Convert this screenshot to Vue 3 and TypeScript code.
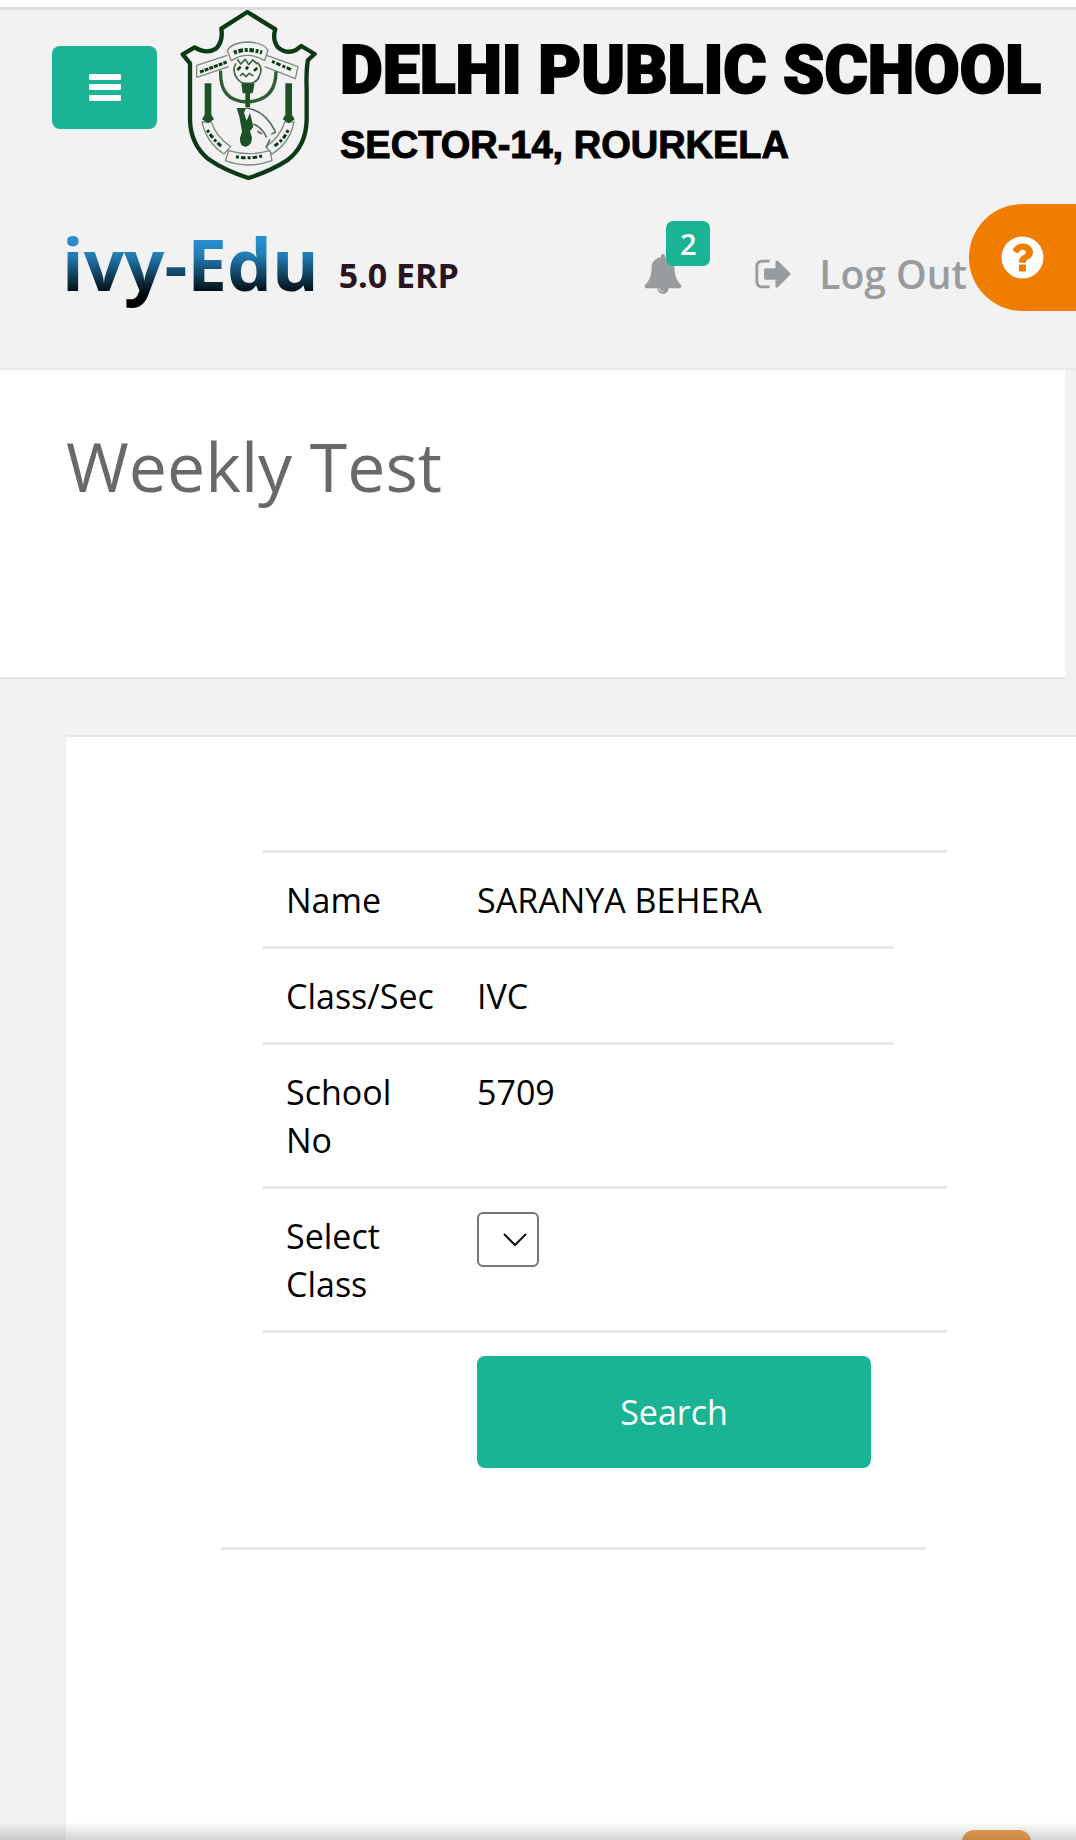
<script setup lang="ts">
import { ref } from 'vue'

interface Detail {
  label: string
  value: string
  spare: boolean
}

const details: Detail[] = [
  { label: 'Name', value: 'SARANYA BEHERA', spare: true },
  { label: 'Class/Sec', value: 'IVC', spare: false },
  { label: 'School No', value: '5709', spare: false },
]

const notices = ref(2)
const selectedClass = ref('')
</script>

<template>
  <div class="page">
    <header class="topbar">
      <div class="school">
        <button class="menu" type="button" aria-label="Menu">
          <svg width="32" height="27" viewBox="0 0 32 27" fill="#fff">
            <rect width="32" height="6" rx="1" />
            <rect y="10" width="32" height="6" rx="1" />
            <rect y="21" width="32" height="6" rx="1" />
          </svg>
        </button>
        <svg class="crest" width="138" height="172" viewBox="30 30 414 516" fill="none" stroke="#0d3a15" stroke-linejoin="round">
          <path stroke-width="13" d="M232 36 L316 88 Q306 118 324 142 Q350 164 378 150 L394 138 L434 162 L414 180 Q408 210 410 270 V360 Q408 440 350 482 Q300 514 235 534 Q165 512 116 478 Q62 434 60 360 V190 L38 163 L74 142 Q110 164 138 146 Q160 124 154 86 Z" />
          <path stroke="#7c8c7c" stroke-width="4" d="M172 152 Q184 128 232 126 Q280 128 294 150 L284 182 Q232 150 184 182 Z M172 166 L80 196 V232 L176 200 M290 166 L384 200 L376 236 L284 200 M96 366 L124 366 Q140 412 182 440 L162 462 Q110 428 96 366 Z M372 366 L344 366 Q330 412 288 440 L306 462 Q360 428 372 366 Z M176 452 Q234 470 300 452 L306 482 Q234 508 166 482 Z" />
          <path stroke-width="9" stroke-dasharray="12 3" d="M90 216 L170 186" />
          <path stroke-width="9" stroke-dasharray="9 5 14 6" d="M306 184 L366 210" />
          <path stroke-width="12" stroke-dasharray="9 5 14 5" d="M192 158 Q232 142 276 158" />
          <path stroke-width="9" stroke-dasharray="9 6 14 6" d="M198 470 Q236 478 276 468 M112 390 Q128 418 158 442 M354 390 Q344 418 308 442" />
          <path stroke="#2f5c38" stroke-width="10" d="M152 212 Q148 304 232 306 Q318 302 318 214" />
          <path stroke="#3f6546" stroke-width="5" d="M198 190 Q184 212 202 236 Q212 252 232 250 Q262 250 268 228 Q280 204 262 188 M202 178 l10 14 14-14 10 16 12-14 14 12 M210 228 l8-8 10 10 10-10 12 8" />
          <path stroke-width="8" d="M202 210 l10-10 M228 208 l6-8 M252 212 l10-8" />
          <path fill="#1d5228" stroke="none" d="M214 250 h40 l-6 30 h-8 v42 h-14 v-42 h-8 Z M200 324 h28 l-6 14 8 24 10-24 10 42-10 14 6 20 q-2 26-20 26 q-18-2-16-26 l6-20-8-44 Z M104 250 h20 v94 l8 14-18 12-18-12 8-14 Z M346 250 h20 v94 l8 14-18 12-18-12 8-14 Z" />
          <path stroke="#56705a" stroke-width="5" d="M228 324 Q284 330 316 394 M250 372 Q276 382 290 412 M262 394 l14 8 M304 402 l14-6 M300 418 l-12 24" />
        </svg>
        <div class="names">
          <p class="school-name">DELHI PUBLIC SCHOOL</p>
          <p class="school-place">SECTOR-14, ROURKELA</p>
        </div>
      </div>
      <div class="product">
        <div class="brand">
          <span class="brand-name">ivy-Edu</span>
          <span class="brand-version">5.0 ERP</span>
        </div>
        <nav class="tools">
          <a class="bell" href="#" aria-label="Notifications">
            <svg width="40" height="40" viewBox="0 0 1792 1792" fill="currentColor">
              <path d="M912 1696q0-16-16-16-59 0-101.5-42.5t-42.5-101.5q0-16-16-16t-16 16q0 73 51.5 124.5t124.5 51.5q16 0 16-16zm816-288q0 52-38 90t-90 38h-448q0 106-75 181t-181 75-181-75-75-181h-448q-52 0-90-38t-38-90q50-42 91-88t85-119.5 74.5-158.5 50-206 19.5-260q0-152 117-282.5t307-158.5q-8-19-8-39 0-40 28-68t68-28 68 28 28 68q0 20-8 39 190 28 307 158.5t117 282.5q0 139 19.5 260t50 206 74.5 158.5 85 119.5 91 88z" />
            </svg>
            <span class="count">{{ notices }}</span>
          </a>
          <a class="logout" href="#">
            <svg width="40" height="40" viewBox="0 0 1792 1792" fill="currentColor">
              <path d="M704 1440q0 4 1 20t.5 26.5-3 23.5-10 19.5-20.5 6.5h-320q-119 0-203.5-84.5t-84.5-203.5v-704q0-119 84.5-203.5t203.5-84.5h320q13 0 22.5 9.5t9.5 22.5q0 4 1 20t.5 26.5-3 23.5-10 19.5-20.5 6.5h-320q-66 0-113 47t-47 113v704q0 66 47 113t113 47h312l11.5 1 11.5 3 8 5.5 7 9 2 13.5zm928-544q0 26-19 45l-544 544q-19 19-45 19t-45-19-19-45v-288h-448q-26 0-45-19t-19-45v-384q0-26 19-45t45-19h448v-288q0-26 19-45t45-19 45 19l544 544q19 19 19 45z" />
            </svg>
            <span>Log Out</span>
          </a>
        </nav>
      </div>
      <button class="help" type="button" aria-label="Help">
        <svg width="49" height="49" viewBox="0 0 1792 1792" fill="#fff">
          <path d="M1024 1376v-192q0-14-9-23t-23-9h-192q-14 0-23 9t-9 23v192q0 14 9 23t23 9h192q14 0 23-9t9-23zm256-672q0-88-55.5-163t-138.5-116-170-41q-243 0-371 213-15 24 8 42l132 100q7 6 19 6 16 0 25-12 53-68 86-92 34-24 86-24 48 0 85.5 26t37.5 59q0 38-20 61t-68 45q-63 28-115.5 86.5t-52.5 125.5v36q0 14 9 23t23 9h192q14 0 23-9t9-23q0-19 21.5-49.5t54.5-49.5q32-18 49-28.5t46-35 44.5-48 28-60.5 12.5-81zm384 192q0 209-103 385.5t-279.5 279.5-385.5 103-385.5-103-279.5-279.5-103-385.5 103-385.5 279.5-279.5 385.5-103 385.5 103 279.5 279.5 103 385.5z" />
        </svg>
      </button>
    </header>

    <section class="heading">
      <h1>Weekly Test</h1>
    </section>

    <main class="card">
      <form class="lookup" @submit.prevent>
        <table>
          <colgroup>
            <col class="col-label" />
            <col />
            <col class="col-spare" />
          </colgroup>
          <tbody>
            <tr v-for="row in details" :key="row.label">
              <th scope="row">{{ row.label }}</th>
              <td>{{ row.value }}</td>
              <td v-if="row.spare"></td>
            </tr>
            <tr>
              <th scope="row"><label for="class-select">Select Class</label></th>
              <td>
                <div class="picker">
                  <select id="class-select" v-model="selectedClass">
                    <option value=""></option>
                  </select>
                  <svg width="24" height="14" viewBox="0 0 24 14" fill="none" stroke="#111" stroke-width="2">
                    <path d="M1 1 L12 12 L23 1" />
                  </svg>
                </div>
              </td>
              <td></td>
            </tr>
            <tr>
              <td></td>
              <td><button class="search" type="submit">Search</button></td>
              <td></td>
            </tr>
          </tbody>
        </table>
      </form>
      <hr />
    </main>

    <div class="edge">
      <span class="tab"></span>
      <span class="shade"></span>
    </div>
  </div>
</template>

<style>
body {
  margin: 0;
  background: #f2f2f2;
}
</style>

<style scoped>
.page {
  position: relative;
  display: flex;
  flex-direction: column;
  min-height: 100vh;
  overflow: hidden;
  background: #f2f2f2;
  color: #000;
  font-family: "Open Sans", "Noto Sans", sans-serif;
  font-size: 34px;
  line-height: 48px;
}

button {
  border: 0;
  padding: 0;
  font: inherit;
  cursor: pointer;
}

a {
  color: inherit;
  text-decoration: none;
}

svg {
  display: block;
  flex: none;
}

.topbar {
  position: relative;
  border-bottom: 2px solid #e7eaec;
}

.topbar::before {
  content: "";
  display: block;
  height: 7px;
  background: #fff;
  border-bottom: 3px solid #dedede;
}

.school {
  display: flex;
  align-items: flex-start;
  padding-left: 52px;
}

.menu {
  display: flex;
  flex: none;
  align-items: center;
  justify-content: center;
  width: 105px;
  height: 83px;
  margin: 36px 23px 0 0;
  border-radius: 8px;
  background: #1ab394;
}

.names {
  padding: 24px 0 0 22px;
  white-space: nowrap;
}

.names p {
  margin: 0;
}

.school-name {
  font-family: Roboto, "Liberation Sans", sans-serif;
  font-size: 66px;
  font-weight: 900;
  line-height: 74px;
  -webkit-text-stroke: 2px #000;
}

.names .school-place {
  margin-top: 18px;
  font-family: "Liberation Sans", Arial, sans-serif;
  font-size: 38px;
  font-weight: 700;
  line-height: 38px;
  -webkit-text-stroke: 1px #000;
}

.product {
  display: flex;
  align-items: flex-start;
  justify-content: space-between;
  padding: 34px 109px 56px 62px;
}

.brand {
  display: flex;
  align-items: flex-end;
  gap: 20px;
}

.brand-name {
  font-size: 71px;
  font-weight: 700;
  line-height: 96px;
  color: transparent;
  background: linear-gradient(#2a8fd0 24px, #217bb2 40px, #000 80px);
  -webkit-background-clip: text;
  background-clip: text;
}

.brand-version {
  padding-bottom: 13px;
  font-weight: 700;
  color: #2a1420;
}

.tools {
  display: flex;
  align-items: center;
  gap: 71px;
  margin-top: 31px;
  color: #999c9e;
}

.bell {
  position: relative;
}

.count {
  position: absolute;
  left: 23px;
  bottom: 28px;
  width: 44px;
  border-radius: 7px;
  background: #1ab394;
  color: #fff;
  font-size: 29px;
  font-weight: 600;
  line-height: 45px;
  text-align: center;
}

.logout {
  display: flex;
  align-items: center;
  gap: 25px;
  font-size: 39px;
  font-weight: 600;
  line-height: 54px;
}

.help {
  position: absolute;
  top: 204px;
  right: 0;
  display: flex;
  align-items: center;
  width: 107px;
  height: 107px;
  padding-left: 29px;
  border-radius: 54px 0 0 54px;
  background: #f07d00;
}

.heading {
  margin-right: 11px;
  padding: 48px 66px 163px;
  border-bottom: 2px solid #e7e7e7;
  background: #fff;
}

h1 {
  margin: 0;
  color: #676a6c;
  font-size: 68px;
  font-weight: 400;
  line-height: 96px;
}

.card {
  flex: 1;
  margin: 56px 0 0 66px;
  padding: 113px 129px 0 155px;
  border-top: 2px solid #e7e7e7;
  background: #fff;
}

.lookup {
  margin-left: 42px;
}

table {
  width: 100%;
  table-layout: fixed;
  border-spacing: 0;
}

.col-label {
  width: 191px;
}

.col-spare {
  width: 53px;
}

th,
td {
  padding: 23px 23px 22px;
  border-top: 3px solid #e7e7e7;
  font-weight: 400;
  text-align: left;
  vertical-align: top;
}

th {
  padding-right: 17px;
}

.picker {
  position: relative;
  width: 62px;
}

.picker select {
  display: block;
  width: 100%;
  height: 55px;
  border: 2px solid #767676;
  border-radius: 6px;
  background: #fff;
  appearance: none;
}

.picker svg {
  position: absolute;
  top: 21px;
  right: 12px;
  pointer-events: none;
}

.search {
  display: block;
  width: 100%;
  height: 112px;
  border-radius: 8px;
  background: #1ab394;
  color: #fff;
}

hr {
  margin: 57px 22px 0 0;
  border: 0;
  border-top: 3px solid #e7e7e7;
}

.edge {
  position: absolute;
  right: 0;
  bottom: 0;
  left: 0;
  height: 18px;
  overflow: hidden;
  pointer-events: none;
}

.tab {
  position: absolute;
  top: 8px;
  right: 45px;
  width: 69px;
  height: 24px;
  border-radius: 12px;
  background: #f0a453;
}

.shade {
  position: absolute;
  inset: 0;
  background: linear-gradient(transparent, rgba(0, 0, 0, 0.17));
}
</style>
